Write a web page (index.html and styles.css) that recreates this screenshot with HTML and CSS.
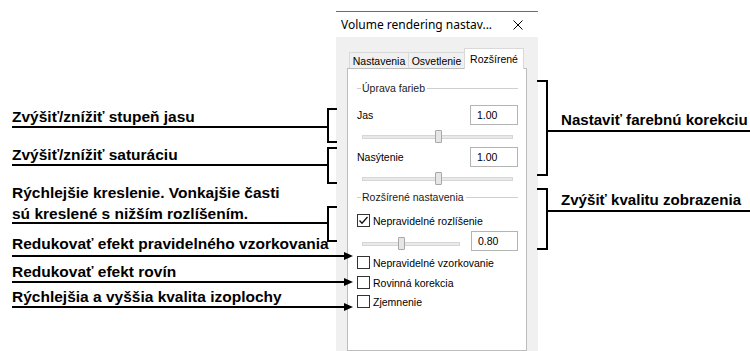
FILE: index.html
```html
<!DOCTYPE html>
<html lang="sk">
<head>
    <meta charset="UTF-8">
    <title>Volume rendering nastavenia</title>
    <link rel="stylesheet" href="styles.css">
</head>
<body>

    <div class="stage">
        <!-- Popisy vlavo -->
        <div class="notes notes-left">
            <p class="note n1">Zvýšiť/znížiť stupeň jasu</p>
            <p class="note n2">Zvýšiť/znížiť saturáciu</p>
            <p class="note n3">Rýchlejšie kreslenie. Vonkajšie časti<br>sú kreslené s nižším rozlíšením.</p>
            <p class="note n4">Redukovať efekt pravidelného vzorkovania</p>
            <p class="note n5">Redukovať efekt rovín</p>
            <p class="note n6">Rýchlejšia a vyššia kvalita izoplochy</p>
        </div>

        <!-- Dialog -->
        <div class="dialog">
            <div class="titlebar">
                <span class="title">Volume rendering nastav...</span>
                <svg class="close" width="10" height="10" viewBox="0 0 10 10">
                    <path d="M0.5 0.5 L9.5 9.5 M9.5 0.5 L0.5 9.5" stroke="#000" stroke-width="1" fill="none"/>
                </svg>
            </div>
            <div class="dialog-body">
                <div class="tabs">
                    <div class="tab t1">Nastavenia</div>
                    <div class="tab t2">Osvetlenie</div>
                    <div class="tab t3 active">Rozšírené</div>
                </div>
                <div class="panel">
                    <div class="group-title g1"><span>Úprava farieb</span></div>

                    <div class="field-row r-jas">
                        <span>Jas</span>
                        <div class="textbox">1.00</div>
                    </div>
                    <div class="slider s1" style="--pos: 50%">
                        <div class="track"></div>
                        <div class="thumb"></div>
                    </div>

                    <div class="field-row r-sat">
                        <span>Nasýtenie</span>
                        <div class="textbox">1.00</div>
                    </div>
                    <div class="slider s2" style="--pos: 50%">
                        <div class="track"></div>
                        <div class="thumb"></div>
                    </div>

                    <div class="group-title g2"><span>Rozšírené nastavenia</span></div>

                    <label class="check c1">
                        <span class="box">
                            <svg width="11" height="11" viewBox="0 0 11 11">
                                <path d="M1.5 5.5 L4 8.2 L9.5 2" stroke="#111" stroke-width="1.3" fill="none"/>
                            </svg>
                        </span>
                        Nepravidelné rozlíšenie
                    </label>

                    <div class="slider-row">
                        <div class="slider s3" style="--pos: 40%">
                            <div class="track"></div>
                            <div class="thumb"></div>
                        </div>
                        <div class="textbox small">0.80</div>
                    </div>

                    <label class="check c2"><span class="box"></span>Nepravidelné vzorkovanie</label>
                    <label class="check c3"><span class="box"></span>Rovinná korekcia</label>
                    <label class="check c4"><span class="box"></span>Zjemnenie</label>
                </div>
            </div>
        </div>

        <!-- Popisy vpravo -->
        <div class="notes notes-right">
            <p class="note r1">Nastaviť farebnú korekciu</p>
            <p class="note r2">Zvýšiť kvalitu zobrazenia</p>
        </div>

        <!-- Spojovacie ciary -->
        <svg class="leaders" width="750" height="351" viewBox="0 0 750 351">
            <g stroke="#000" stroke-width="2" fill="none">
                <path d="M12 127 H328"/>
                <path d="M337 109 H328 V142 H337"/>
                <path d="M12 165 H328"/>
                <path d="M337 148 H328 V183 H337"/>
                <path d="M12 223 H328"/>
                <path d="M337 207 H328 V241 H337"/>
                <path d="M12 256 H346"/>
                <path d="M12 282 H346"/>
                <path d="M12 307 H346"/>
                <path d="M537 81 H547 V175 H537"/>
                <path d="M547 131 H750"/>
                <path d="M537 189 H547 V249 H537"/>
                <path d="M547 211 H750"/>
            </g>
            <g fill="#000">
                <polygon points="344,252 353,256 344,260"/>
                <polygon points="344,278 353,282 344,286"/>
                <polygon points="344,303 353,307 344,311"/>
            </g>
        </svg>
    </div>

</body>
</html>
```

FILE: styles.css
```css
/* Page Setup */
body {
    margin: 0;
    background: #fff;
    color: #000;
    font-family: "Liberation Sans", Arial, sans-serif;
}

.stage {
    position: relative;
    display: grid;
    grid-template-columns: 336px 202px 212px;
    width: 750px;
    height: 351px;
    overflow: hidden;
}

/* Annotation labels */
.notes {
    font-size: 15.5px;
    font-weight: bold;
    line-height: 18px;
}

.note {
    margin: 0;
    white-space: nowrap;
}

.notes-left {
    padding-left: 12px;
}

.n1 { margin-top: 108px; }
.n2 { margin-top: 20px; }
.n3 { margin-top: 18px; line-height: 21px; }
.n4 { margin-top: 11px; }
.n5 { margin-top: 10px; }
.n6 { margin-top: 7px; }

.notes-right {
    padding-left: 23px;
    font-size: 15.1px;
}

.r1 { margin-top: 111px; }
.r2 { margin-top: 62px; }

.leaders {
    position: absolute;
    top: 0;
    left: 0;
    pointer-events: none;
}

/* Dialog window */
.dialog {
    display: flex;
    flex-direction: column;
    margin-top: 11px;
    border-top: 1px solid #1883d7;
    font-size: 10.5px;
}

.titlebar {
    display: flex;
    align-items: center;
    justify-content: space-between;
    height: 25px;
    padding: 0 15px 0 5px;
    background: #fff;
    font-family: "Noto Sans", "Liberation Sans", sans-serif;
    font-size: 12px;
    color: #000;
}

.dialog-body {
    flex: 1;
    background: #f0f0f0;
    padding: 11px 11px 0;
}

/* Tabs */
.tabs {
    position: relative;
    z-index: 1;
    display: flex;
    align-items: flex-end;
    height: 20px;
    padding-left: 2px;
}

.tab {
    box-sizing: border-box;
    height: 16px;
    border: 1px solid #d9d9d9;
    border-bottom: none;
    background: #f0f0f0;
    text-align: center;
    line-height: 15px;
    padding-top: 1px;
}

.t1 { width: 60px; }
.t2 { width: 57px; margin-left: -1px; }
.t3 { width: 60px; margin-left: -1px; }

.tab.active {
    height: 21px;
    margin-bottom: -1px;
    background: #fff;
    padding-top: 3px;
}

.panel {
    box-sizing: border-box;
    height: 283px;
    padding: 12px 8px 0 9px;
    background: #fff;
    border: 1px solid #bdbdbd;
}

/* Group titles */
.group-title {
    display: flex;
    align-items: center;
    height: 14px;
    color: #1a1a1a;
}

.group-title::before,
.group-title::after {
    content: "";
    height: 1px;
    background: #cfcfcf;
}

.group-title::before {
    width: 4px;
}

.group-title::after {
    flex: 1;
}

.group-title span {
    padding: 0 2px 0 1px;
}

.g2 { margin-top: 5px; }

/* Fields */
.field-row {
    display: flex;
    justify-content: space-between;
    align-items: center;
    height: 20px;
    margin-top: 10px;
}

.r-sat { margin-top: 4px; }

.textbox {
    box-sizing: border-box;
    width: 48px;
    height: 20px;
    padding-left: 6px;
    border: 1px solid #b4b4b4;
    background: #fff;
    line-height: 18px;
}

.textbox.small {
    width: 47px;
    margin-left: 11px;
}

/* Sliders */
.slider {
    position: relative;
    height: 13px;
    margin: 5px 5px 0;
}

.track {
    position: absolute;
    left: 0;
    right: 0;
    top: 5px;
    height: 4px;
    box-sizing: border-box;
    background: #e7eaea;
    border: 1px solid #d6d6d6;
}

.thumb {
    position: absolute;
    top: 0;
    left: calc(var(--pos) - 3px);
    box-sizing: border-box;
    width: 7px;
    height: 13px;
    background: #e6e6e6;
    border: 1px solid #a8a8a8;
    border-radius: 1px;
}

.slider-row {
    display: flex;
    align-items: flex-start;
    height: 20px;
    margin-top: 4px;
}

.slider-row .slider {
    flex: 1;
    margin: 6px 0 0 5px;
}

/* Checkboxes */
.check {
    display: flex;
    align-items: center;
    gap: 3px;
    height: 13px;
}

.box {
    box-sizing: border-box;
    display: flex;
    align-items: center;
    justify-content: center;
    width: 13px;
    height: 13px;
    border: 1px solid #333;
    background: #fff;
}

.c1 { margin-top: 10px; }
.c2 { margin-top: 5px; }
.c3 { margin-top: 7px; }
.c4 { margin-top: 6px; }
```
